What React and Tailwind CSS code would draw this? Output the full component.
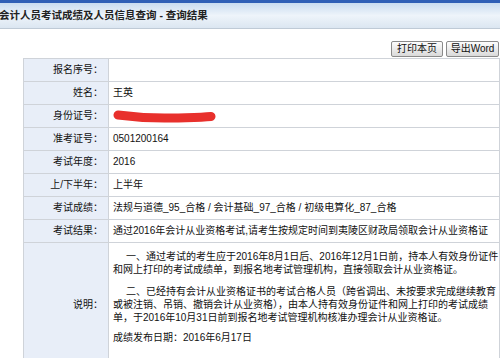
const FONT = { fontFamily: '"Liberation Sans", "Noto Sans CJK SC", sans-serif' }

const ROWS = [
  { label: '报名序号：', value: '' },
  { label: '姓名：', value: '王英' },
  { label: '身份证号：', value: 'REDACTED' },
  { label: '准考证号：', value: '0501200164' },
  { label: '考试年度：', value: '2016' },
  { label: '上/下半年：', value: '上半年' },
  { label: '考试成绩：', value: '法规与道德_95_合格 / 会计基础_97_合格 / 初级电算化_87_合格' },
  { label: '考试结果：', value: '通过2016年会计从业资格考试,请考生按规定时间到夷陵区财政局领取会计从业资格证' },
]

function Scribble() {
  return (
    <svg width="104" height="16" viewBox="0 0 104 16" className="block">
      <path
        d="M5 7 C 20 9, 40 10.5, 60 10 C 75 9.5, 88 9.5, 98 8.5"
        fill="none"
        stroke="#e8302c"
        strokeWidth="9"
        strokeLinecap="round"
      />
    </svg>
  )
}

export default function App() {
  return (
    <div className="w-[500px] h-[358px] overflow-hidden bg-white text-[10px] text-[#111]" style={FONT}>
      {/* title bar */}
      <div className="h-[29px] border-t-[3px] border-[#2f5fb6] border-b border-b-[#bfcad6] bg-gradient-to-b from-[#c9dcf0] via-[#eef4fa] to-[#dbe6f1] flex items-center">
        <h1 className="text-[10.5px] font-bold leading-none -ml-[1px] text-[#222] whitespace-nowrap">
          会计人员考试成绩及人员信息查询 - 查询结果
        </h1>
      </div>

      {/* toolbar */}
      <div className="flex justify-end gap-[3px] pr-[1px] pt-[12px] pb-[1px]">
        <button className="h-[16px] w-[52px] border border-[#8a8a8a] rounded-[2px] bg-gradient-to-b from-[#fdfdfd] to-[#dadada] text-[10px] leading-none text-[#111]">
          打印本页
        </button>
        <button className="h-[16px] w-[53px] border border-[#8a8a8a] rounded-[2px] bg-gradient-to-b from-[#fdfdfd] to-[#dadada] text-[10px] leading-none text-[#111]">
          导出Word
        </button>
      </div>

      {/* result table */}
      <table className="ml-[23px] w-[477px] border-collapse">
        <tbody>
          {ROWS.map((r, i) => (
            <tr key={i} className="h-[23px]">
              <td className="w-[85px] bg-[#e8eef8] border border-[#cfd3d9] text-right pr-[5px] leading-none whitespace-nowrap">
                {r.label}
              </td>
              <td className="border border-[#cfd3d9] pl-[4px] leading-none whitespace-nowrap">
                {r.value === 'REDACTED' ? <Scribble /> : r.value}
              </td>
            </tr>
          ))}
          <tr>
            <td className="w-[85px] bg-[#e8eef8] border border-[#cfd3d9] text-right pr-[5px] align-middle">
              说明：
            </td>
            <td className="border border-[#cfd3d9] pl-[4px] pt-[7px] pb-[22px] leading-[13px] whitespace-nowrap">
              <p className="indent-[13px]">
                一、通过考试的考生应于2016年8月1日后、2016年12月1日前，持本人有效身份证件
                <br />
                和网上打印的考试成绩单，到报名地考试管理机构，直接领取会计从业资格证。
              </p>
              <p className="indent-[13px] mt-[9px]">
                二、已经持有会计从业资格证书的考试合格人员（跨省调出、未按要求完成继续教育
                <br />
                或被注销、吊销、撤销会计从业资格），由本人持有效身份证件和网上打印的考试成绩
                <br />
                单，于2016年10月31日前到报名地考试管理机构核准办理会计从业资格证。
              </p>
              <p className="mt-[7px]">成绩发布日期：2016年6月17日</p>
            </td>
          </tr>
        </tbody>
      </table>
    </div>
  )
}
